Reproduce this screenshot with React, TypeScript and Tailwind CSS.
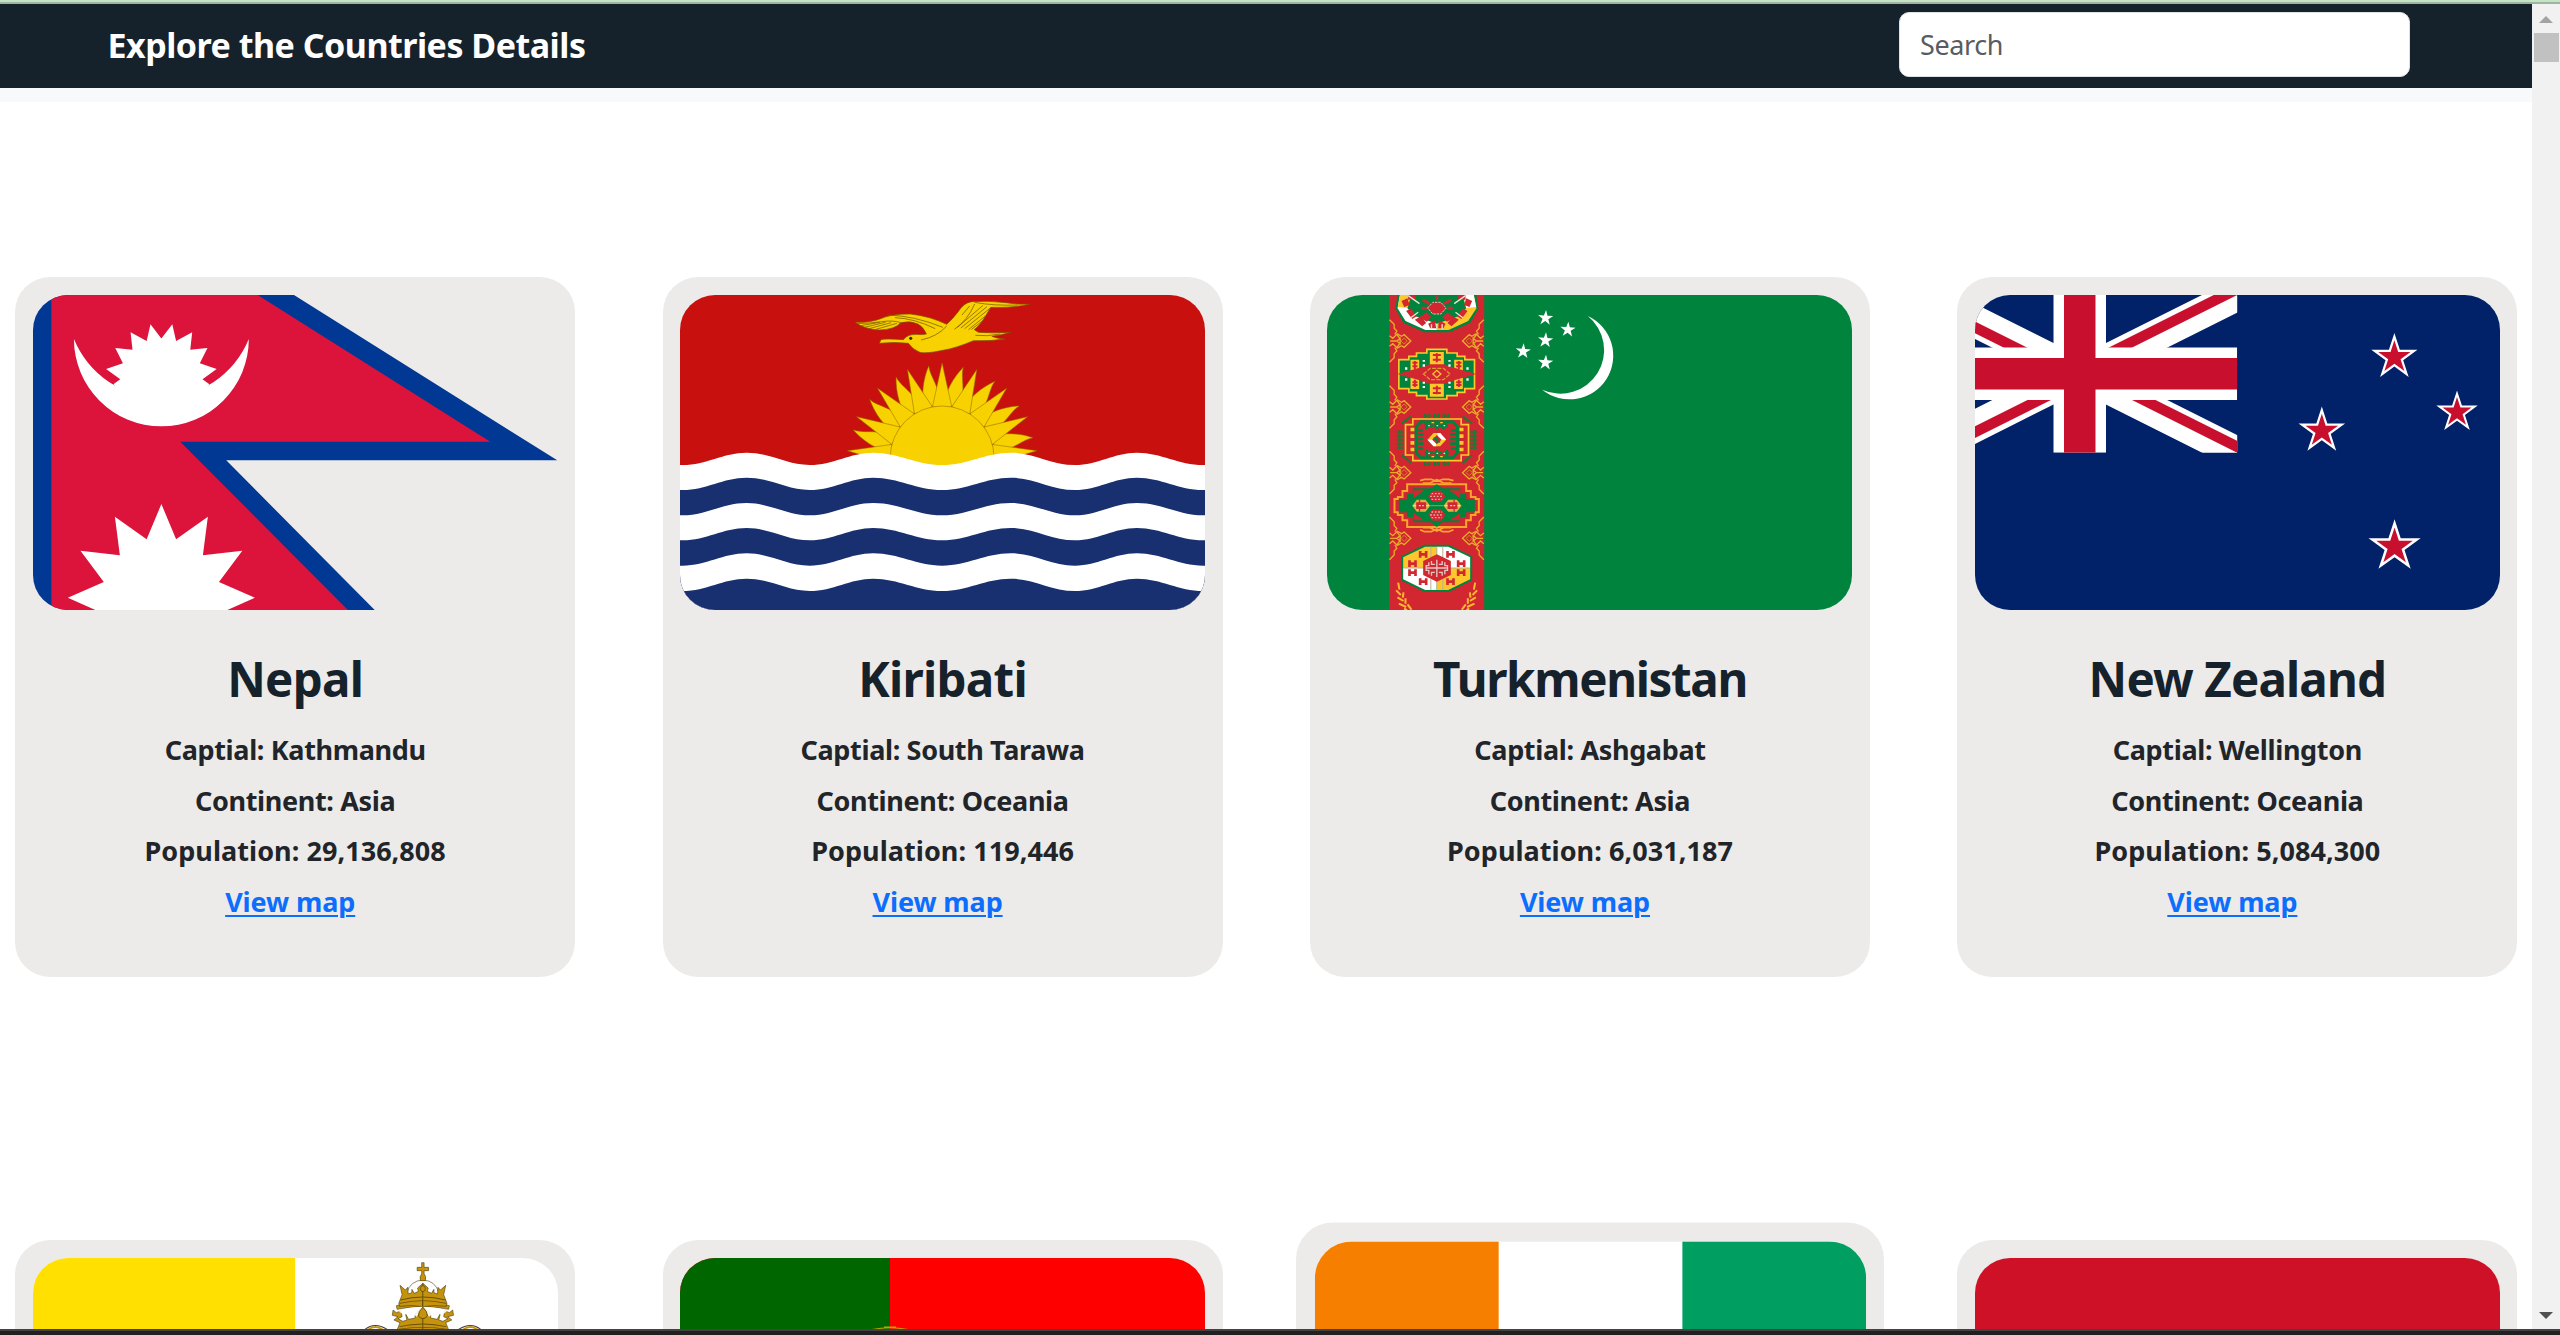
import type { ReactNode } from 'react';

/** Mirrors a half outline around a vertical axis and returns polygon points. */
function mirrored(half: [number, number][], axis: number) {
  const other = half.map(([x, y]): [number, number] => [2 * axis - x, y]).reverse();
  return [...half, ...other].map((p) => p.join(',')).join(' ');
}

function star(cx: number, cy: number, rx: number, ry: number, inner = 0.382) {
  return Array.from({ length: 10 }, (_, i) => {
    const a = (i * Math.PI) / 5;
    const k = i % 2 ? inner : 1;
    return `${(cx + Math.sin(a) * rx * k).toFixed(2)},${(cy - Math.cos(a) * ry * k).toFixed(2)}`;
  }).join(' ');
}

function Flag({ viewBox, children }: { viewBox: string; children: ReactNode }) {
  return (
    <svg viewBox={viewBox} preserveAspectRatio="none" className="block h-[315px] w-[525px] rounded-[35px]">
      {children}
    </svg>
  );
}

function NepalFlag() {
  return (
    <Flag viewBox="85 75 1372 945">
      <path d="M85 75H767L1455 571H590L978 1020H85Z" fill="#003893" />
      <path d="M133 75H672L1280 515H470L908 1020H133Z" fill="#dc143c" />
      <path d="M192 207A246.7 283 0 0 0 649 207A228.4 262 0 0 1 192 207Z" fill="#fff" />
      <polygon
        fill="#fff"
        points={mirrored(
          [[420, 420], [330, 380], [295, 343], [313, 328], [276, 297], [320, 280], [300, 234], [345, 239], [340, 187], [382, 213], [392, 163], [420, 205]],
          420.5,
        )}
      />
      <polygon
        fill="#fff"
        points={mirrored(
          [[248, 1020], [176, 983], [270, 936], [209, 842], [312, 856], [299, 740], [382, 808], [420.5, 702]],
          420.5,
        )}
      />
    </Flag>
  );
}

const waveTroughs = [585, 660, 736, 811, 887, 963];

function wave(y: number) {
  const xs = [85, 252, 417, 583, 763, 942, 1110, 1272, 1445];
  let d = `M60 ${y}L85 ${y}`;
  for (let i = 1; i < xs.length; i++) {
    const from = i % 2 ? y : y - 37;
    const to = i % 2 ? y - 37 : y;
    const w = (xs[i] - xs[i - 1]) * 0.37;
    d += `C${xs[i - 1] + w} ${from} ${xs[i] - w} ${to} ${xs[i]} ${to}`;
  }
  return `${d}H1460V1030H60Z`;
}

function KiribatiFlag() {
  const straight = Array.from({ length: 9 }, (_, i) => (i - 4) * 21.4);
  const curved = Array.from({ length: 8 }, (_, i) => (i - 3.5) * 21.4);
  return (
    <Flag viewBox="78 75 1372 945">
      <rect x="78" y="75" width="1372" height="945" fill="#c8100f" />
      <g transform="translate(763 564) scale(2.613 3)" fill="#f7d100" stroke="#8f6c00" strokeWidth="0.5">
        {curved.map((a) => (
          <path key={a} transform={`rotate(${a})`} d="M-8 -53C-9 -66 -4 -81 4 -93C3 -82 11 -72 8 -53Z" />
        ))}
        {straight.map((a) => (
          <path key={a} transform={`rotate(${a})`} d="M-9.7 -51L0 -95L9.7 -51Z" />
        ))}
        <circle r="52" />
      </g>
      <g fill="#f7d100" stroke="#7d5300" strokeWidth="2">
        <path d="M599 220L603 209Q612 205 662 209Q672 193 695 193Q710 195 722 192Q715 172 700 162Q680 151 655 158Q640 178 600 180Q560 178 536 157Q575 158 600 147Q630 131 680 132Q730 138 775 163Q790 148 805 125Q820 98 840 95Q880 91 930 98Q960 104 992 102Q950 114 890 112Q880 132 870 150Q860 168 847 179L858 187Q900 190 942 187Q915 196 893 199Q905 206 927 207Q890 214 845 212Q800 234 765 241Q720 252 705 247Q685 238 675 220Q640 215 599 220Z" />
      </g>
      <path
        d="M540 161Q575 160 605 155T655 158M550 167L600 157M560 172L615 157M572 176L630 158M590 178L645 160M620 135Q690 137 765 172M640 143Q690 145 745 176M795 178Q830 150 848 102M803 172L870 106M812 174L880 110M822 176L888 115M832 179L876 138M840 178L868 153M848 97Q900 108 960 105M835 108L815 135M708 210Q750 200 775 168M850 196Q880 200 915 192"
        fill="none"
        stroke="#806000"
        strokeWidth="2.2"
      />
      <ellipse cx="681" cy="205" rx="4" ry="5" fill="#3b2500" />
      {waveTroughs.map((y, i) => (
        <path key={y} d={wave(y)} fill={i % 2 ? '#18306f' : '#fff'} />
      ))}
    </Flag>
  );
}

function Motif({ y }: { y: number }) {
  const half = (
    <g fill="none" stroke="#e8ab2a" strokeWidth="4">
      <path d="M240 118L254 132V144L262 152L256 162M240 246L254 232V220L262 212L256 202" />
      <path d="M262 160L276 168L284 163L304 182L284 201L276 196L262 204" />
      <path d="M240 166L250 174L262 162L272 176M240 198L250 190L262 202L272 188M242 182H262L272 174V190L262 182" />
      <path d="M274 182L284 173L293 182L284 191Z" strokeWidth="3" stroke="#c9871f" />
    </g>
  );
  return (
    <g transform={`translate(0 ${y - 182})`}>
      {half}
      <g transform="translate(763 0) scale(-1 1)">{half}</g>
    </g>
  );
}

function TurkmenistanFlag() {
  const green = '#00843d';
  const red = '#d22630';
  const gold = '#ffc72c';
  return (
    <Flag viewBox="52.5 44 1575 945">
      <rect x="52" y="44" width="1576" height="945" fill={green} />
      <rect x="239" y="44" width="285" height="945" fill={red} />
      {[182, 380, 577, 774].map((y) => (
        <Motif key={y} y={y} />
      ))}

      {/* first gul */}
      <path d="M264 40L258 85L282 128L345 156H420L482 128L507 85L500 40Z" fill={green} />
      <path d="M272 40L264 84L288 122L348 149H382V84L300 40Z" fill="#fff" />
      <path d="M492 40L501 84L476 122L417 149H382V84L470 40Z" fill={gold} />
      <path d="M272 40L265 80L300 84V40Z" fill={gold} />
      <path d="M492 40L500 80L465 84V40Z" fill="#fff" />
      <path d="M306 40L294 84L318 108L382 130L446 108L470 84L458 40Z" fill={green} />
      <path d="M290 92L304 84L322 108L308 116ZM316 118L334 108L350 128L338 138ZM356 130L376 120L380 144L362 144ZM474 92L460 84L442 108L456 116ZM448 118L430 108L414 128L426 138ZM408 130L388 120L386 144L402 144ZM276 62L294 54L300 74L284 80ZM488 62L470 54L464 74L480 80ZM296 44H318V58H296ZM446 44H468V58H446Z" fill={red} />
      <path d="M330 112L350 96L366 110L352 124ZM434 112L414 96L398 110L412 124Z" fill={red} />
      <path d="M296 46L330 70M326 96L304 112M468 46L434 70M438 96L460 112M366 132V146M398 132V146" stroke="#ece2d0" strokeWidth="4" />
      <path d="M340 58L360 70M424 58L404 70M334 84H354M412 84H430M382 48V60" stroke={red} strokeWidth="9" />
      <path d="M354 83L370 66H394L410 83L394 101H370Z" fill={red} stroke="#dcc9bb" strokeWidth="3" strokeDasharray="7 3" />

      {/* second gul */}
      <path d="M352 207H412V218H443V228H466V238H495V325H466V336H443V346H412V356H352V346H321V336H298V325H268V238H298V228H321V218H352Z" fill={green} stroke={gold} strokeWidth="5" />
      <path d="M303 238H329V326H303ZM361 215H403V349H361ZM434 238H460V326H434Z" fill={gold} />
      <path d="M264 281L330 262L360 252H404L434 262L500 281L434 300L404 310H360L330 300Z" fill={red} />
      <path d="M309 247H324M316 242V266M309 258H324M440 247H456M448 242V266M440 258H456M309 306H324M316 298V320M309 314H324M440 306H456M448 298V320M440 314H456M370 224H394M382 219V246M370 238H394M370 324H394M382 316V342M370 338H394" stroke={red} strokeWidth="6" />
      <path d="M343 239V244M343 252V259M420 239V244M420 252V259M343 304V310M343 317V323M420 304V310M420 317V323M290 261V268M290 294V301M474 261V268M474 294V301" stroke="#f4f7f3" strokeWidth="7" />
      <path d="M342 281L362 264H402L422 281L402 298H362Z" fill="none" stroke="#d99a28" strokeWidth="4" strokeDasharray="12 4" />
      <path d="M370 281L382 270L394 281L382 292Z" fill={red} stroke={gold} strokeWidth="4" />

      {/* third gul */}
      <path d="M346 401V412M360 401V412M374 401V412M388 401V412M402 401V412M416 401V412M344 406H362M372 406H390M400 406H418M346 544V556M360 544V556M374 544V556M388 544V556M402 544V556M416 544V556M344 550H362M372 550H390M400 550H418" stroke="#1c7a34" strokeWidth="6" />
      <path d="M262 454H282M262 466H284M262 478H284M262 490H284M262 502H282M270 450V506M482 454H502M480 466H502M480 478H502M480 490H502M482 502H502M494 450V506M276 430L292 418L304 408M488 430L472 418L460 408M276 524L292 536L304 548M488 524L472 536L460 548" stroke="#1c7a34" strokeWidth="6" />
      <path d="M310 416H455V433H477V524H455V541H310V524H288V433H310Z" fill={red} stroke={gold} strokeWidth="5" />
      <path d="M309 442V516M456 442V516" stroke={gold} strokeWidth="12" strokeDasharray="11 9" />
      <path d="M334 424H430L444 440V516L430 532H334L320 516V440Z" fill={red} stroke={green} strokeWidth="9" />
      <path d="M326 450H340M326 462H342M326 476H342M326 490H342M326 504H340M424 450H440M422 462H440M422 476H440M422 490H440M424 504H440M346 436H370M374 436H398M402 426V446M350 426V446M382 426V446M414 436H400M346 518H370M374 518H398M382 508V530M352 508V530M412 508V530M400 518H418" stroke={green} strokeWidth="8" />
      <path d="M356 436H361M381 436H386M402 436H407M356 519H361M381 519H386M402 519H407" stroke="#e6e7d8" strokeWidth="4" />
      <path d="M366 427H374M392 427H400M366 529H374M392 529H400" stroke={gold} strokeWidth="4" />
      <path d="M354 478L372 458H392L410 478L392 498H372Z" fill={gold} />
      <path d="M384 458H392L410 478H384ZM354 478H380V498H372Z" fill="#fff" />
      <path d="M368 478L382 464L396 478L382 492Z" fill={red} />
      <path d="M372 474H382V484H392" fill="none" stroke={green} strokeWidth="5" />

      {/* fourth gul */}
      <path d="M332 601L345 597H365L382 603L400 597H418L432 601M340 608H362L382 598L402 608H426M332 748L345 754H365L382 746L400 754H418L432 748M340 742H362L382 752L402 742H426" fill="none" stroke="#fba52d" strokeWidth="5" />
      <path d="M293 612H470V632H484V650H498V656H508V696H498V704H484V720H470V740H293V720H279V704H265V696H255V656H265V650H279V632H293Z" fill={red} stroke="#fba52d" strokeWidth="6" />
      <path d="M382 612L400 624H452V640H470V656H496V696H470V710H452V726H400L382 740L362 726H310V710H292V696H268V656H292V640H310V624H362Z" fill={green} />
      <path d="M312 630H344L312 654ZM452 630H420L452 654ZM312 720H344L312 698ZM452 720H420L452 698Z" fill={red} />
      <path d="M356 648L370 631H394L408 648L394 665H370ZM356 704L370 687H394L408 704L394 721H370Z" fill={red} />
      <path d="M366 640H398M362 648H402M366 657H398M366 695H398M362 704H402M366 712H398" stroke="#d9b8a8" strokeWidth="4" strokeDasharray="5 5" />
      <path d="M308 676L322 658H348L362 676L348 694H322ZM402 676L416 658H442L456 676L442 694H416Z" fill="#d8b445" />
      <path d="M322 668H348V684H322ZM416 668H442V684H416ZM330 658V694M434 658V694" fill={red} stroke={red} strokeWidth="4" />
      <path d="M312 676H320M328 676H334M338 676H343M350 676H358M406 676H414M422 676H428M432 676H437M444 676H452" stroke="#e5dfbd" strokeWidth="4" />
      <path d="M362 676H402" stroke="#8bab3b" strokeWidth="3" />

      {/* fifth gul */}
      <path d="M345 793H418L488 828V900L418 935H345L275 900V828Z" fill={green} />
      <path d="M347 799L281 831V863H382V799Z" fill={gold} />
      <path d="M416 799L482 831V863H382V799Z" fill="#fff" />
      <path d="M347 929L281 897V863H382V929Z" fill="#fff" />
      <path d="M416 929L482 897V863H382V929Z" fill={gold} />
      <path d="M282 863H482M364 799V832M400 799V832M364 896V929M400 896V929M382 799V929" stroke="#b6b28c" strokeWidth="3" />
      <path d="M332 812V832M350 812V832M332 822H350M414 812V832M432 812V832M414 822H432M300 840V860M318 840V860M300 850H318M446 840V860M464 840V860M446 850H464M300 867V887M318 867V887M300 877H318M446 867V887M464 867V887M446 877H464M332 894V914M350 894V914M332 904H350M414 894V914M432 894V914M414 904H432" stroke={red} strokeWidth="8" />
      <path d="M382 822L424 842V884L382 904L341 884V842Z" fill={red} />
      <path d="M358 846V856H350V870H358V882M406 846V856H414V870H406V882M382 838V890M366 842V852H376M398 842V852H388M366 886V876H376M398 886V876H388M352 863H412" fill="none" stroke="#e3c9c4" strokeWidth="4" />

      {/* olive branches */}
      <g fill="none" stroke="#fbb92d" strokeWidth="6">
        <path d="M266 907L270 928M260 930L274 944M282 936L280 952M264 951L282 962M288 954L288 970M268 970L290 980M294 972L306 988M284 984L292 990" />
        <path d="M497 907L493 928M503 930L489 944M481 936L483 952M499 951L481 962M475 954L475 970M495 970L473 980M469 972L457 988M479 984L471 990" />
      </g>

      {[[708, 113], [775, 148], [708, 180], [641, 213], [708, 247]].map(([x, y]) => (
        <polygon key={`${x}-${y}`} points={star(x, y, 24, 24)} transform={`rotate(4 ${x} ${y})`} fill="#fff" />
      ))}
      <path d="M835 107A131 131 0 1 1 698 328A131 131 0 0 0 835 107Z" fill="#fff" />
    </Flag>
  );
}

function NewZealandFlag() {
  const stars = [
    [1142, 262, 24.3],
    [1303, 427, 21.8],
    [955.5, 483, 24.5],
    [1142.5, 830, 27.4],
  ];
  return (
    <Flag viewBox="64 75 1349.5 945">
      <rect x="64" y="75" width="1350" height="945" fill="#012169" />
      <svg x="-71.5" y="75" width="809.5" height="473" viewBox="0 0 60 30" preserveAspectRatio="none">
        <clipPath id="saltire">
          <path d="M30 15h30v15zv15H0zH0V0zV0h30z" />
        </clipPath>
        <path d="M0 0L60 30M60 0L0 30" stroke="#fff" strokeWidth="6" />
        <path d="M0 0L60 30M60 0L0 30" clipPath="url(#saltire)" stroke="#c8102e" strokeWidth="4" />
        <path d="M30 0V30M0 15H60" stroke="#fff" strokeWidth="10" />
        <path d="M30 0V30M0 15H60" stroke="#c8102e" strokeWidth="6" />
      </svg>
      {stars.map(([x, y, r]) => (
        <g key={`${x}-${y}`}>
          <polygon points={star(x, y, r * 2.57, r * 3)} fill="#fff" />
          <polygon points={star(x, y, r * 1.8, r * 2.1)} fill="#c8102e" />
        </g>
      ))}
    </Flag>
  );
}

function VaticanFlag() {
  const half = (
    <g>
      <path d="M1035 318Q1000 318 972 326L970 315Q1000 303 1035 303Z" />
      <path d="M1035 318Q1005 312 978 317L976 308L984 282L979 254L992 268L998 260L999 280L1008 276V266L1014 278L1024 272L1022 262L1035 248Z" />
      <path d="M1035 390H971L979 366L964 358L974 348L960 344L962 328L970 336L982 330L984 348L974 354L986 362L996 358L992 338L1000 356L1016 352V340L1022 330L1035 318Z" />
    </g>
  );
  return (
    <Flag viewBox="80 172 1286 945">
      <rect x="80" y="172" width="1286" height="945" fill="#fff" />
      <rect x="80" y="172" width="642" height="945" fill="#ffe000" />
      <g fill="#c5940c" stroke="#3d3008" strokeWidth="1.5">
        <path d="M996 276Q1004 240 1035 238Q1066 240 1074 276" fill="none" />
        {half}
        <g transform="translate(2070 0) scale(-1 1)">{half}</g>
        <path d="M1032 186H1038V200H1049V210H1038V220Q1044 226 1041 240H1029Q1026 226 1032 220V210H1021V200H1032Z" />
        <ellipse cx="1035" cy="264" rx="6" ry="9" />
      </g>
      <path d="M980 298Q1035 280 1090 298M978 308Q1035 292 1092 308M978 378Q1035 362 1092 378M974 386Q1035 374 1096 386" fill="none" stroke="#6b500a" strokeWidth="2.5" />
      <path d="M975 330Q1035 306 1095 330L1082 344Q1064 332 1050 348L1035 318L1020 348Q1006 332 988 344Z" fill="#fff" fillOpacity="0.9" />
      <path d="M1024 346Q1023 332 1035 320Q1047 332 1046 346Q1035 362 1024 346Z" fill="#c5940c" stroke="#3d3008" strokeWidth="1.8" />
      <g fill="none" stroke="#4a4230" strokeWidth="3">
        <path d="M888 392Q916 358 952 390M1182 392Q1154 358 1118 390" />
        <path d="M900 388Q918 370 938 388M1170 388Q1152 370 1132 388" stroke="#c5940c" strokeWidth="5" />
      </g>
    </Flag>
  );
}

function PortugalFlag() {
  return (
    <Flag viewBox="0 0 525 315">
      <rect width="525" height="315" fill="#f00" />
      <rect width="210" height="315" fill="#060" />
      <path d="M192 71.5Q210 68 228 71.5M204 69H216" fill="none" stroke="#b8a800" strokeWidth="1.2" />
    </Flag>
  );
}

function IvoryCoastFlag() {
  return (
    <Flag viewBox="0 0 525 315">
      <rect width="525" height="315" fill="#fff" />
      <rect width="175" height="315" fill="#f77f00" />
      <rect x="350" width="175" height="315" fill="#009e60" />
    </Flag>
  );
}

function RedFlag() {
  return (
    <Flag viewBox="0 0 525 315">
      <rect width="525" height="315" fill="#ce1126" />
    </Flag>
  );
}

type Country = { name: string; capital: string; continent: string; population: string; flag: ReactNode; tracking: string };

const countries: Country[] = [
  { name: 'Nepal', capital: 'Kathmandu', continent: 'Asia', population: '29,136,808', flag: <NepalFlag />, tracking: 'tracking-[-0.7px]' },
  { name: 'Kiribati', capital: 'South Tarawa', continent: 'Oceania', population: '119,446', flag: <KiribatiFlag />, tracking: 'tracking-[-0.7px]' },
  { name: 'Turkmenistan', capital: 'Ashgabat', continent: 'Asia', population: '6,031,187', flag: <TurkmenistanFlag />, tracking: 'tracking-[-1.35px]' },
  { name: 'New Zealand', capital: 'Wellington', continent: 'Oceania', population: '5,084,300', flag: <NewZealandFlag />, tracking: 'tracking-[-0.85px]' },
];

const nextRow = [
  { id: 'va', flag: <VaticanFlag />, hovered: false },
  { id: 'pt', flag: <PortugalFlag />, hovered: false },
  { id: 'ci', flag: <IvoryCoastFlag />, hovered: true },
  { id: 'red', flag: <RedFlag />, hovered: false },
];

function CountryCard({ c }: { c: Country }) {
  return (
    <article className="h-[700px] rounded-[35px] bg-[#ecebe9] p-[17.5px] text-center font-bold text-[#212529]">
      {c.flag}
      <h2 className={`mt-[38.5px] mb-4 text-[47.5px] leading-[61px] text-[#16222b] ${c.tracking}`}>{c.name}</h2>
      <div className="text-[27px] leading-[50.6px] tracking-[-0.35px]">
        <p>Captial: {c.capital}</p>
        <p>Continent: {c.continent}</p>
        <p className="tracking-[0.05px]">Population: {c.population}</p>
        <p className="pr-2.5 tracking-[-0.1px]">
          <a href="#" className="text-[#0d6efd] underline decoration-2 underline-offset-[3px]">
            View map
          </a>
        </p>
      </div>
    </article>
  );
}

export default function App() {
  return (
    <div className="flex h-[1335px] w-[2560px] flex-col overflow-hidden bg-white font-['Noto_Sans',sans-serif]">
      <div className="h-1 shrink-0 border-b-2 border-[#9fb39f] bg-[#c5e3c6]" />
      <div className="flex h-[1325px] shrink-0">
        <div className="flex w-[2532px] flex-col overflow-hidden">
          <header className="flex h-[84px] shrink-0 items-center justify-between bg-[#16222b] pr-[122px] pb-[3px] pl-[107.5px]">
            <h1 className="text-[34px] leading-[50px] font-bold tracking-[-0.5px] text-white">
              Explore the Countries Details
            </h1>
            <input
              type="search"
              placeholder="Search"
              className="h-[65px] w-[511px] rounded-[10px] border border-[#dee2e6] bg-white px-5 text-[27px] tracking-[-0.4px] text-[#212529] placeholder:text-[#595c5f]"
            />
          </header>
          <div className="h-3.5 shrink-0 bg-[#f8f9fb]" />
          <main className="grid grid-cols-[repeat(4,560px)] gap-x-[87.4px] gap-y-[263px] pt-[175px] pl-[15.2px]">
            {countries.map((c) => (
              <CountryCard key={c.name} c={c} />
            ))}
            {nextRow.map((c) => (
              <article
                key={c.id}
                className={`h-[700px] rounded-[35px] bg-[#ecebe9] p-[17.5px] ${c.hovered ? 'scale-105' : ''}`}
              >
                {c.flag}
              </article>
            ))}
          </main>
        </div>
        <aside className="flex w-7 flex-col items-center bg-[#f1f1f1] pt-3 pb-2.5">
          <svg viewBox="0 0 14 7" className="h-[7px] w-[14px]">
            <path d="M7 0L14 7H0Z" fill="#a3a3a3" />
          </svg>
          <div className="mt-2.5 h-[29px] w-[25px] bg-[#c1c1c1]" />
          <svg viewBox="0 0 14 7" className="mt-auto h-[7px] w-[14px]">
            <path d="M0 0H14L7 7Z" fill="#505050" />
          </svg>
        </aside>
      </div>
      <div className="h-1.5 shrink-0 border-t-2 border-[#444243] bg-[#231e1f]" />
    </div>
  );
}
